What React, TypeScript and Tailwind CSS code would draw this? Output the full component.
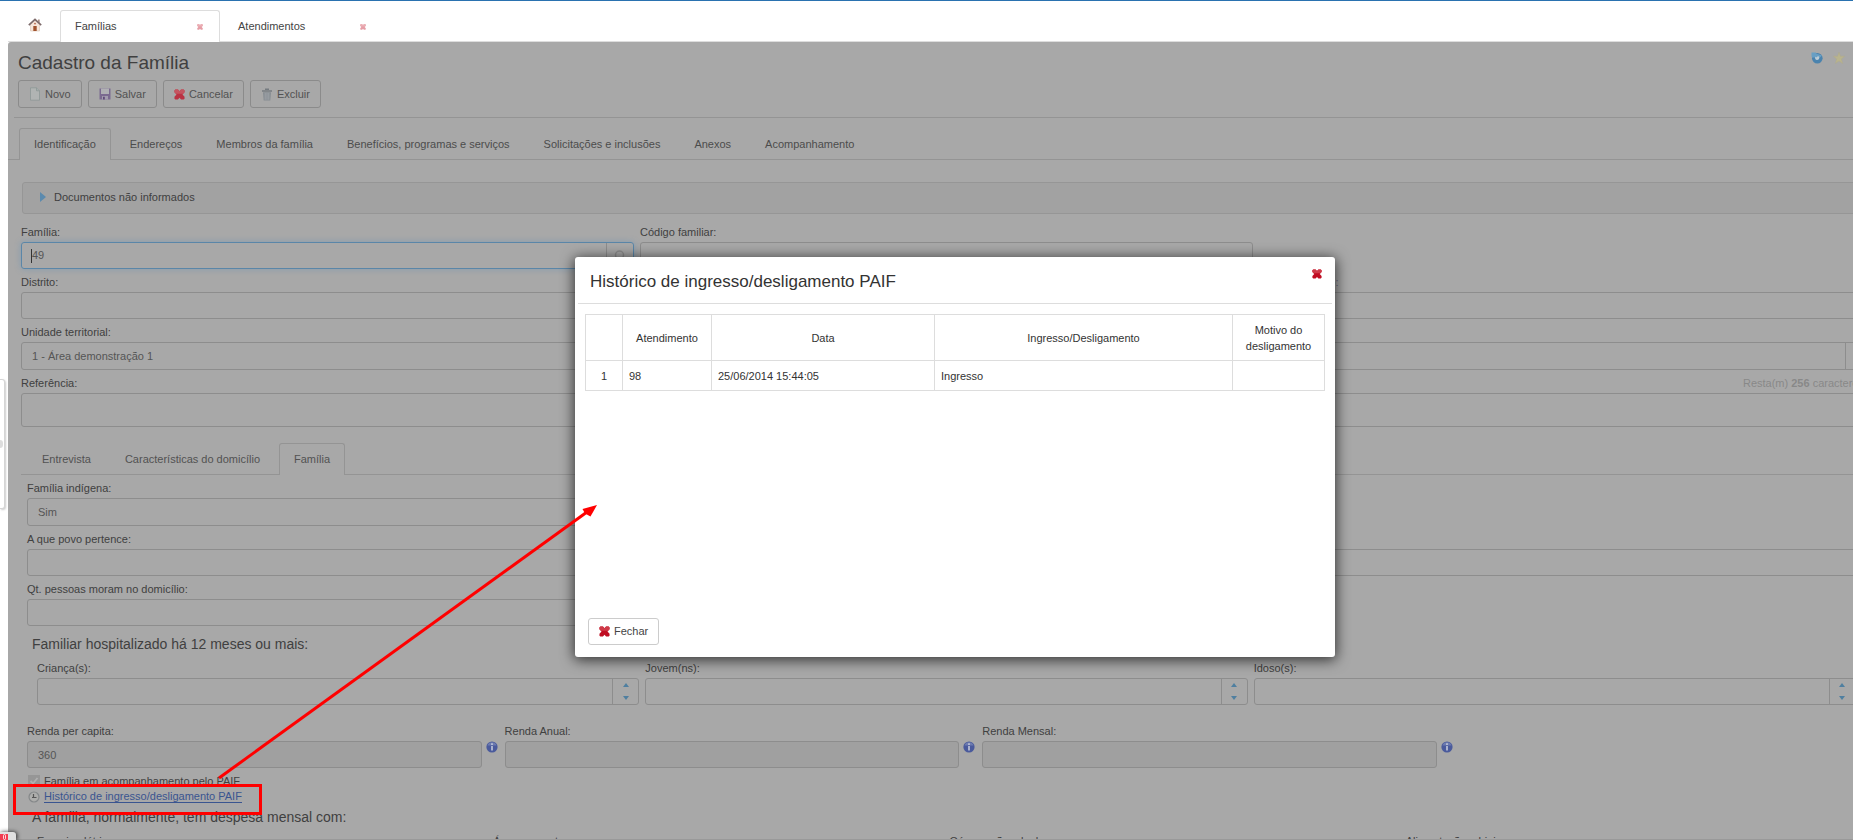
import type { ReactNode } from 'react';
import { clsx } from 'clsx';

const windowTabs = [
    { name: 'Famílias', active: true },
    { name: 'Atendimentos', active: false }
];

const sections = [
    'Identificação',
    'Endereços',
    'Membros da família',
    'Benefícios, programas e serviços',
    'Solicitações e inclusões',
    'Anexos',
    'Acompanhamento'
];

const subSections = ['Entrevista', 'Características do domicílio', 'Família'];

const hospitalized = ['Criança(s):', 'Jovem(ns):', 'Idoso(s):'];

const incomes = [
    { label: 'Renda per capita:', value: '360' },
    { label: 'Renda Anual:', value: '' },
    { label: 'Renda Mensal:', value: '' }
];

const expenses = ['Energia elétrica:', 'Água e esgoto:', 'Gás, carvão e lenha:', 'Alimentação e higiene:'];

const history = [{ id: 98, date: '25/06/2014 15:44:05', kind: 'Ingresso', reason: '' }];

const CrossIcon = ({ className }: { className?: string }) => (
    <svg viewBox="0 0 12 12" className={clsx('shrink-0', className)} aria-hidden="true">
        <path d="M1.5.5h2.800L6 2.500 7.700.5h2.800l1 1v2L9.300 6l2.200 2.500v2l-1 1H7.700L6 9.500l-1.700 2H1.500l-1-1v-2L2.700 6 .5 3.500v-2Z" fill="#c00d22" />
        <path d="M1.5.5h2.800L6 2.500 7.700.5h2.800l1 1v2L10 5.200H2L.5 3.500v-2Z" fill="#cf3a48" />
    </svg>
);

const HouseIcon = () => (
    <svg viewBox="0 0 14 14" className="h-3.5 w-3.5" aria-hidden="true">
        <path d="M2.500 6.500 7 2.500l4.500 4V13h-9Z" fill="#f7e6da" stroke="#d9c2b4" strokeWidth=".6" />
        <path d="M10 1.500h1.700V5L10 3.500Z" fill="#a98f86" />
        <path d="M.8 7.200 7 1.400l6.200 5.800" fill="none" stroke="#7d6a6a" strokeWidth="1.600" />
        <path d="M5.300 8h3.400v5H5.300Z" fill="#a0522d" />
        <circle cx="7" cy="5.600" r=".9" fill="#b5654a" />
    </svg>
);

const PageIcon = () => (
    <svg viewBox="0 0 12 14" className="h-3.5 w-3" aria-hidden="true">
        <path d="M1.500.8h6l3 3v9.400h-9Z" fill="#b0b4b3" stroke="#8d9796" strokeWidth=".8" />
        <path d="M7.500.8v3h3" fill="#a3adab" stroke="#8d9796" strokeWidth=".8" />
    </svg>
);

const DiskIcon = () => (
    <svg viewBox="0 0 12 12" className="h-3 w-3" aria-hidden="true">
        <path d="M.5.5h11v11h-11Z" fill="#7b6a90" />
        <path d="M2 .5h8V6H2Z" fill="#b0b0b4" />
        <path d="M3 8h6v3.500H3Z" fill="#a39cae" />
        <path d="M4 8.800h1.800v2.700H4Z" fill="#5f4a78" />
    </svg>
);

const TrashIcon = () => (
    <svg viewBox="0 0 12 13" className="h-[13px] w-3" aria-hidden="true">
        <path d="M4 1.300h4M1 3h10" stroke="#757b80" strokeWidth="1.400" />
        <path d="M2 4.200h8l-.7 8.300H2.700Z" fill="#868c92" />
        <path d="M4.200 5v6.800M6 5v6.800M7.800 5v6.800" stroke="#a9aeb2" strokeWidth=".7" />
    </svg>
);

const InfoIcon = () => (
    <svg viewBox="0 0 12 12" className="h-3 w-3 shrink-0" aria-hidden="true">
        <circle cx="6" cy="6" r="5.600" fill="#4a5a9c" />
        <path d="M1.500 4.500a4.800 4.800 0 0 1 9 0Z" fill="#6d7bb0" />
        <path d="M6 2.300v1.600M6 5v4.600" stroke="#c4c9da" strokeWidth="1.600" />
    </svg>
);

const ClockIcon = () => (
    <svg viewBox="0 0 12 12" className="h-3 w-3 shrink-0" aria-hidden="true">
        <circle cx="6" cy="6" r="5" fill="#adadab" stroke="#85888a" strokeWidth="1.200" />
        <path d="M5.500 3v3.500M4 6.500h4.500" fill="none" stroke="#555" strokeWidth="1.200" />
    </svg>
);

const RefreshIcon = () => (
    <svg viewBox="0 0 12 12" className="h-3 w-3" aria-hidden="true">
        <circle cx="6.300" cy="6.300" r="5.300" fill="#4a83ae" />
        <path d="M.5.5H5v1L11 3.500 9 5.500H1.200L.5 4.500Z" fill="#699fc4" />
        <path d="M4.200 4.500c.5 1 1.300 1 1.800.2.800-1 2-.6 2.300.6.200 1.500-.8 2.700-2.300 2.700S3.700 6.500 4.200 4.500Z" fill="#bccbd5" />
    </svg>
);

const StarIcon = () => (
    <svg viewBox="0 0 12 12" className="h-3 w-3" aria-hidden="true">
        <path d="M6 .3 7.500 4.200H11.700L8.500 6.900 9.600 11.500 6 9 2.400 11.500 3.500 6.900.3 4.200H4.500Z" fill="#b9b48e" stroke="#aeaa8c" strokeWidth=".5" />
    </svg>
);

const ToolButton = ({ icon, children }: { icon: ReactNode; children: ReactNode }) => (
    <button className="flex h-7 items-center gap-1 rounded-[3px] border border-[#8b8b8b] px-2.5 text-[#525252]">
        {icon}
        {children}
    </button>
);

const box = 'w-full min-w-0 rounded-[3px] border border-[#8d8d8d] px-2.5 text-[#555] outline-none';

type FieldProps = { label: string; id: string; className?: string; children: ReactNode };

const Field = ({ label, id, className, children }: FieldProps) => (
    <div className={clsx('min-w-0', className)}>
        <label htmlFor={id} className="mt-1 block h-[19px] leading-[19px]">{label}</label>
        {children}
    </div>
);

const SelectBox = ({ id, value }: { id: string; value: string }) => (
    <div className="relative">
        <select id={id} className={clsx(box, 'block h-7 appearance-none')}>
            <option>{value}</option>
        </select>
        <span className="pointer-events-none absolute inset-y-0 right-0 w-[27px] border-l border-[#8d8d8d]" />
    </div>
);

const HistoryDialog = () => (
    <div
        role="dialog"
        aria-labelledby="dialog-title"
        className="absolute left-[575px] top-64 flex h-[400px] w-[760px] flex-col rounded-[3px] bg-white text-[#333] shadow-[0_2px_14px_1px_rgba(0,0,0,0.7)]"
    >
        <div className="mx-[3px] flex h-[47px] items-start justify-between border-b border-[#ddd] pl-3 pr-2.5">
            <h2 id="dialog-title" className="pt-3.5 text-[17px] leading-[22px]">Histórico de ingresso/desligamento PAIF</h2>
            <button aria-label="Fechar janela" className="pt-3">
                <CrossIcon className="h-2.5 w-2.5" />
            </button>
        </div>
        <table className="mx-2.5 mt-2.5 table-fixed border-collapse leading-4">
            <colgroup>
                <col className="w-[37px]" />
                <col className="w-[89px]" />
                <col className="w-[223px]" />
                <col />
                <col className="w-[92px]" />
            </colgroup>
            <thead>
                <tr className="h-[46px]">
                    {['', 'Atendimento', 'Data', 'Ingresso/Desligamento', 'Motivo do desligamento'].map((title) => (
                        <th key={title} className="border border-[#ddd] px-1 font-normal">{title}</th>
                    ))}
                </tr>
            </thead>
            <tbody>
                {history.map((row, index) => (
                    <tr key={row.id} className="h-[30px]">
                        <td className="border border-[#ddd] text-center">{index + 1}</td>
                        <td className="border border-[#ddd] px-1.5">{row.id}</td>
                        <td className="border border-[#ddd] px-1.5">{row.date}</td>
                        <td className="border border-[#ddd] px-1.5">{row.kind}</td>
                        <td className="border border-[#ddd] px-1.5">{row.reason}</td>
                    </tr>
                ))}
            </tbody>
        </table>
        <div className="mt-auto px-[13px] pb-3">
            <button className="flex h-[27px] items-center gap-1 rounded-[3px] border border-[#ccc] px-2.5 text-[#444]">
                <CrossIcon className="h-[11px] w-[11px]" />
                Fechar
            </button>
        </div>
    </div>
);

// Red frame round the link and the arrow that leads to the dialog
const Callout = () => (
    <svg className="pointer-events-none absolute inset-0 h-full w-full" aria-hidden="true">
        <rect x="14.500" y="784.500" width="246" height="28" fill="none" stroke="#f00" strokeWidth="3" />
        <path d="M219 777 587 511" stroke="#f00" strokeWidth="3" />
        <path d="M597 504 582.500 508 585 512.500 590.500 515.500Z" fill="#f00" />
    </svg>
);

export default function App() {
    return (
        <div className="relative flex h-screen flex-col overflow-hidden border-t border-[#2a72b0] bg-white font-['Liberation_Sans',Arial,sans-serif] text-[11px] text-[#404040]">
            <nav className="ml-2 flex h-[41px] shrink-0 items-end border-b border-[#ddd]">
                <a href="#inicio" aria-label="Início" className="mr-[18px] flex h-8 items-center pl-5">
                    <HouseIcon />
                </a>
                {windowTabs.map((tab) => (
                    <div
                        key={tab.name}
                        className={clsx(
                            '-mb-px mr-[3px] flex h-8 w-40 items-center justify-between rounded-t-[3px] border border-b-0 pb-2 pl-3.5 pr-4 pt-2 text-[#444]',
                            tab.active ? 'border-[#ddd] bg-white' : 'border-transparent'
                        )}
                    >
                        <a href="#aba">{tab.name}</a>
                        <button aria-label={'Fechar ' + tab.name} className="opacity-40">
                            <CrossIcon className="h-1.5 w-1.5" />
                        </button>
                    </div>
                ))}
            </nav>

            <main className="ml-2 min-h-0 flex-1 overflow-hidden rounded-tl-[3px] border-b border-[#999] bg-[#a8a8a8]">
                <header className="ml-1.5 border-b border-[#949494] pb-[9px] pl-1 pt-2">
                    <div className="flex items-start justify-between pr-2">
                        <h1 className="h-[30px] text-[19px] leading-[26px] text-[#404040]">Cadastro da Família</h1>
                        <div className="flex gap-2.5 pt-0.5">
                            <button aria-label="Atualizar"><RefreshIcon /></button>
                            <button aria-label="Favorito"><StarIcon /></button>
                        </div>
                    </div>
                    <div className="flex gap-1.5">
                        <ToolButton icon={<PageIcon />}>Novo</ToolButton>
                        <ToolButton icon={<DiskIcon />}>Salvar</ToolButton>
                        <ToolButton icon={<CrossIcon className="h-[11px] w-[11px] opacity-75" />}>Cancelar</ToolButton>
                        <ToolButton icon={<TrashIcon />}>Excluir</ToolButton>
                    </div>
                </header>

                <nav className="mt-2.5 flex h-8 gap-1 border-b border-[#949494] pl-[11px]">
                    {sections.map((name, index) => (
                        <a
                            key={name}
                            href="#secao"
                            className={clsx(
                                'h-8 rounded-t-[3px] border border-b-0 px-3.5 leading-[31px] text-[#4c4c4c]',
                                index === 0 ? 'border-[#949494] bg-[#a8a8a8]' : 'border-transparent'
                            )}
                        >
                            {name}
                        </a>
                    ))}
                </nav>

                <form className="-mr-[19px] pl-[13px]">
                    <button type="button" className="ml-px mt-[22px] flex h-8 w-full items-center gap-2 rounded-[3px] border border-[#969696] bg-[#a2a2a2] pb-0.5 pl-[17px]">
                        <svg viewBox="0 0 6 10" className="h-2.5 w-1.5" aria-hidden="true">
                            <path d="M0 0 6 5 0 10Z" fill="#5b8aae" />
                        </svg>
                        Documentos não informados
                    </button>

                    <div className="grid grid-cols-3 gap-x-1.5 pt-[5px]">
                        <Field label="Família:" id="familia">
                            <div className="flex h-[27px] rounded-[3px] border border-[#5a86a8] shadow-[0_0_6px_rgba(82,140,190,0.4)]">
                                <div className="flex min-w-0 flex-1 items-center pl-[9px]">
                                    <span className="h-3.5 w-px bg-[#333]" />
                                    <input id="familia" defaultValue="49" className="min-w-0 flex-1 bg-transparent text-[#555] outline-none" />
                                </div>
                                <button type="button" aria-label="Pesquisar família" className="flex w-[27px] items-center justify-center border-l border-[#8d8d8d]">
                                    <svg viewBox="0 0 12 12" className="h-3 w-3" fill="none" stroke="#8d8d8d" strokeWidth="1.500" aria-hidden="true">
                                        <circle cx="5.500" cy="5" r="4" />
                                        <path d="m8.500 8 3 3.500" />
                                    </svg>
                                </button>
                            </div>
                        </Field>
                        <Field label="Código familiar:" id="codigo">
                            <input id="codigo" className={clsx(box, 'block h-[27px]')} />
                        </Field>
                        <Field label="Distrito:" id="distrito" className="col-span-2 col-start-1">
                            <input id="distrito" className={clsx(box, 'block h-[27px]')} />
                        </Field>
                        <Field label="Setor censitário:" id="setor" className="text-[#6b6b85]">
                            <input id="setor" className={clsx(box, 'block h-[27px]')} />
                        </Field>
                        <Field label="Unidade territorial:" id="unidade" className="col-span-3">
                            <SelectBox id="unidade" value="1 - Área demonstração 1" />
                        </Field>
                    </div>
                    <div className="mt-1 flex h-[19px] items-center justify-between pr-2">
                        <label htmlFor="referencia">Referência:</label>
                        <span className="text-[#888]">Resta(m) <b>256</b> caracteres</span>
                    </div>
                    <textarea id="referencia" className={clsx(box, 'block h-[34px] resize-none')} />

                    <nav className="mt-4 flex h-8 gap-1 border-b border-[#949494] pl-1.5">
                        {subSections.map((name) => (
                            <a
                                key={name}
                                href="#subsecao"
                                className={clsx(
                                    'h-8 rounded-t-[3px] border border-b-0 px-3.5 leading-[31px] text-[#525252]',
                                    name === 'Família' ? 'border-[#949494] bg-[#a8a8a8]' : 'border-transparent'
                                )}
                            >
                                {name}
                            </a>
                        ))}
                    </nav>

                    <div className="pl-1.5">
                        <Field label="Família indígena:" id="indigena" className="w-1/3">
                            <SelectBox id="indigena" value="Sim" />
                        </Field>
                        <Field label="A que povo pertence:" id="povo">
                            <input id="povo" className={clsx(box, 'block h-[27px]')} />
                        </Field>
                        <Field label="Qt. pessoas moram no domicílio:" id="pessoas" className="w-1/3">
                            <input id="pessoas" className={clsx(box, 'block h-[27px]')} />
                        </Field>

                        <h2 className="h-[29px] pl-[5px] pt-2 text-sm leading-5">Familiar hospitalizado há 12 meses ou mais:</h2>
                        <div className="grid grid-cols-3 gap-x-1.5 pl-2.5 pr-4">
                            {hospitalized.map((label) => (
                                <Field key={label} label={label} id={label}>
                                    <div className="flex h-[27px] rounded-[3px] border border-[#8d8d8d]">
                                        <input id={label} className="min-w-0 flex-1 bg-transparent px-2.5 outline-none" />
                                        <span className="flex w-[26px] flex-col items-center justify-between border-l border-[#8d8d8d] py-1">
                                            <button type="button" aria-label="Aumentar">
                                                <svg viewBox="0 0 6 4" className="block h-1 w-1.5"><path d="M3 0 6 4H0Z" fill="#4f7fa0" /></svg>
                                            </button>
                                            <button type="button" aria-label="Diminuir">
                                                <svg viewBox="0 0 6 4" className="block h-1 w-1.5"><path d="M3 4 6 0H0Z" fill="#4f7fa0" /></svg>
                                            </button>
                                        </span>
                                    </div>
                                </Field>
                            ))}
                        </div>

                        <div className="mt-[13px] flex pr-2">
                            {incomes.map((income) => (
                                <Field key={income.label} label={income.label} id={income.label} className="w-[26%] shrink-0">
                                    <div className="flex items-start gap-1 pr-[7px]">
                                        <input id={income.label} defaultValue={income.value} readOnly className={clsx(box, 'h-[27px] bg-[#a0a0a0]')} />
                                        <InfoIcon />
                                    </div>
                                </Field>
                            ))}
                        </div>

                        <div className="flex h-[19px] items-end gap-1 pl-px">
                            <span className="relative h-3 w-3">
                                <input id="paif" type="checkbox" defaultChecked className="block h-3 w-3 appearance-none bg-[#969696]" />
                                <svg viewBox="0 0 12 12" className="pointer-events-none absolute inset-0" aria-hidden="true">
                                    <path d="m2.500 6 2.500 2.500L9.500 3" fill="none" stroke="#b0b0b0" strokeWidth="1.800" />
                                </svg>
                            </span>
                            <label htmlFor="paif" className="leading-3">Família em acompanhamento pelo PAIF</label>
                        </div>
                        <div className="flex h-[19px] items-center gap-1 pl-px">
                            <ClockIcon />
                            <a href="#historico" className="border-b border-[#3a5590] leading-3 text-[#3a5590]">Histórico de ingresso/desligamento PAIF</a>
                        </div>
                        <h2 className="h-[22px] pl-[5px] text-sm leading-[22px]">A família, normalmente, tem despesa mensal com:</h2>
                        <div className="grid grid-cols-4 gap-x-1.5 pl-2.5 pr-4">
                            {expenses.map((label) => (
                                <Field key={label} label={label} id={label}>
                                    <input id={label} className={clsx(box, 'block h-[27px]')} />
                                </Field>
                            ))}
                        </div>
                    </div>
                </form>
            </main>

            <aside className="absolute left-0 top-[378px] flex h-[130px] w-[5px] items-center rounded-r-[3px] border border-l-0 border-[#d5d5d5] bg-white shadow-[1px_1px_2px_rgba(0,0,0,0.2)]">
                <span className="h-2 w-[3px] rounded-r-full bg-[#ddd]" />
            </aside>
            <aside className="absolute bottom-0 left-0 h-2 w-4 rounded-tr-[3px] bg-[#e0e0e0] pt-0.5 shadow-[1px_0_4px_rgba(0,0,0,0.8)]">
                <span className="flex h-1.5 w-2 justify-center bg-[#f23c50]">
                    <span className="h-1.5 w-[3px] rounded-full border border-white/80" />
                </span>
            </aside>

            <HistoryDialog />
            <Callout />
        </div>
    );
}
